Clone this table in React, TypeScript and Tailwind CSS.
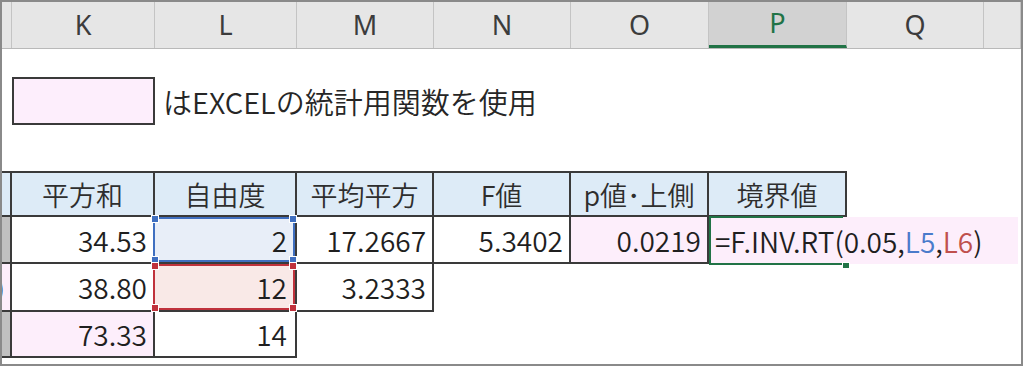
import React from "react";

const line = "border-[#3a3a3a]";

function Handles({ color }: { color: string }) {
  return (
    <>
      <span className={`absolute -left-[4px] -top-[4px] w-[8px] h-[8px] border border-white ${color}`} />
      <span className={`absolute -right-[4px] -top-[4px] w-[8px] h-[8px] border border-white ${color}`} />
      <span className={`absolute -left-[4px] -bottom-[4px] w-[8px] h-[8px] border border-white ${color}`} />
      <span className={`absolute -right-[4px] -bottom-[4px] w-[8px] h-[8px] border border-white ${color}`} />
    </>
  );
}

export default function App() {
  const headers = [
    { k: "J", w: "w-[10px]", t: "" },
    { k: "K", w: "w-[143px]", t: "K" },
    { k: "L", w: "w-[142px]", t: "L" },
    { k: "M", w: "w-[137px]", t: "M" },
    { k: "N", w: "w-[137px]", t: "N" },
    { k: "O", w: "w-[138px]", t: "O" },
    { k: "P", w: "w-[138px]", t: "P" },
    { k: "Q", w: "w-[137px]", t: "Q" },
    { k: "R", w: "flex-1", t: "" },
  ];

  return (
    <div className="w-[1023px] h-[366px] bg-white border-2 border-[#8a8a8a] overflow-hidden font-['Noto_Sans_CJK_JP',sans-serif] font-[350] text-[#1f1f1f]">
      {/* column header */}
      <div className="flex h-[47px] bg-[#e6e6e6] border-b border-[#b9b9b9]">
        {headers.map((h) =>
          h.k === "P" ? (
            <div
              key={h.k}
              className={`${h.w} flex items-center justify-center bg-[#d2d2d2] border-r border-[#c4c4c4] border-b-[3px] border-b-[#217346] text-[#217346] text-[27px] font-normal font-['Noto_Sans',sans-serif]`}
            >
              {h.t}
            </div>
          ) : (
            <div
              key={h.k}
              className={`${h.w} flex items-center justify-center border-r border-[#c4c4c4] text-[#3c3c3c] text-[27px] font-normal font-['Noto_Sans',sans-serif]`}
            >
              {h.t}
            </div>
          )
        )}
      </div>

      {/* legend */}
      <div className="h-[28px]" />
      <div className="flex h-[48px] items-center">
        <div className="w-[10px]" />
        <div className={`w-[143px] h-[48px] border-2 ${line} bg-[#fdeefc]`} />
        <span className="ml-[8px] text-[29px] leading-none text-[#262626]">
          はEXCELの統計用関数を使用
        </span>
      </div>
      <div className="h-[46px]" />

      {/* table header */}
      <div className="flex h-[46px] text-[27px] leading-none">
        <div className={`w-[10px] bg-[#ddebf7] border-t-2 border-r-2 border-b-2 ${line}`} />
        {[
          ["w-[143px]", "平方和"],
          ["w-[142px]", "自由度"],
          ["w-[137px]", "平均平方"],
          ["w-[137px]", "F値"],
          ["w-[138px]", "p値･上側"],
          ["w-[138px]", "境界値"],
        ].map(([w, t]) => (
          <div
            key={t}
            className={`${w} flex items-center justify-center bg-[#ddebf7] border-t-2 border-r-2 border-b-2 ${line} text-[#2e2e2e]`}
          >
            {t}
          </div>
        ))}
      </div>

      {/* row 1 */}
      <div className="flex h-[47px] text-[28px] leading-none">
        <div className={`w-[10px] bg-[#c0c0c0] border-r-2 border-b-2 ${line}`} />
        <div className={`w-[143px] flex items-center justify-end pr-[6px] border-r-2 border-b-2 ${line}`}>34.53</div>
        <div className={`relative w-[142px] flex items-center justify-end pr-[8px] bg-[#e8eef8] border-r-2 border-b-2 ${line}`}>
          2
          <div className="absolute top-0 -left-[2px] right-0 bottom-0 border-2 border-[#3f6fc0]">
            <Handles color="bg-[#3f6fc0]" />
          </div>
        </div>
        <div className={`w-[137px] flex items-center justify-end pr-[6px] border-r-2 border-b-2 ${line}`}>17.2667</div>
        <div className={`w-[137px] flex items-center justify-end pr-[6px] border-r-2 border-b-2 ${line}`}>5.3402</div>
        <div className={`w-[138px] flex items-center justify-end pr-[6px] bg-[#fdeefb] border-r-2 border-b-2 ${line}`}>0.0219</div>
        <div className="relative flex-1 flex items-center pl-[6px] bg-[#fdeefb] whitespace-nowrap">
          <span>=F.INV.RT(0.05,</span>
          <span className="text-[#4a7bcb]">L5</span>
          <span>,</span>
          <span className="text-[#c0504d]">L6</span>
          <span>)</span>
          <div className="absolute -top-[1px] left-0 w-[134px] h-[49px] border-t-2 border-l-2 border-b-2 border-[#217346]" />
          <div className="absolute left-[133px] top-[45px] w-[8px] h-[7px] bg-[#217346] border border-white" />
        </div>
        <div className="w-[3px]" />
      </div>

      {/* row 2 */}
      <div className="flex h-[48px] text-[28px] leading-none">
        <div className={`w-[10px] overflow-hidden flex items-center justify-end pr-[5px] bg-[#fdeefb] border-r-2 border-b-2 ${line}`}>
          )
        </div>
        <div className={`w-[143px] flex items-center justify-end pr-[6px] border-r-2 border-b-2 ${line}`}>38.80</div>
        <div className={`relative w-[142px] flex items-center justify-end pr-[8px] bg-[#f9e9e7] border-r-2 border-b-2 ${line}`}>
          12
          <div className="absolute top-0 -left-[2px] right-0 bottom-0 border-2 border-[#c0323c]">
            <Handles color="bg-[#c0323c]" />
          </div>
        </div>
        <div className={`w-[137px] flex items-center justify-end pr-[6px] border-r-2 border-b-2 ${line}`}>3.2333</div>
      </div>

      {/* row 3 */}
      <div className="flex h-[46px] text-[28px] leading-none">
        <div className={`w-[10px] bg-[#c0c0c0] border-r-2 border-b-2 ${line}`} />
        <div className={`w-[143px] flex items-center justify-end pr-[6px] bg-[#fdeefb] border-r-2 border-b-2 ${line}`}>73.33</div>
        <div className={`w-[142px] flex items-center justify-end pr-[8px] border-r-2 border-b-2 ${line}`}>14</div>
      </div>
    </div>
  );
}
